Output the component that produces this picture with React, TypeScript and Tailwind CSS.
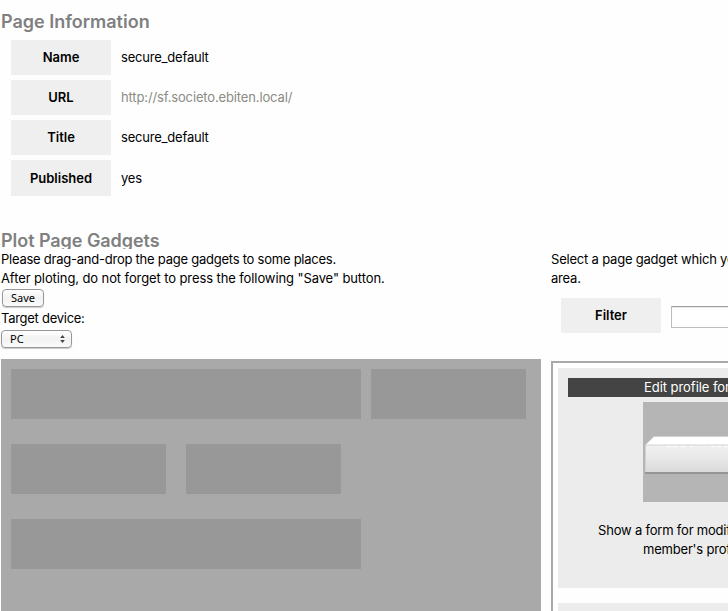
import type { ReactNode } from "react";

function InfoRow({ label, tall, children }: { label: ReactNode; tall?: boolean; children: ReactNode }) {
  return (
    <div className={tall ? "flex h-9 items-center" : "flex h-[35px] items-center"}>
      <div className="flex h-full w-[100px] items-center justify-center bg-[#efefef] font-semibold">{label}</div>
      <div className="ml-2.5 whitespace-nowrap tracking-[-0.2px]">{children}</div>
    </div>
  );
}

function SelectArrows() {
  return (
    <svg className="h-2 w-[5px]" viewBox="0 0 5 8" fill="#444">
      <path d="M2.5 0 4.8 3H.2zM2.5 8 .2 5h4.6z" />
    </svg>
  );
}

function BoxPicture() {
  return (
    <svg className="ml-[75px] mt-[5px] block h-[100px] w-[100px] bg-[#b5b5b5]" viewBox="0 0 100 100">
      <defs>
        <linearGradient id="front" x1="0" y1="0" x2="0" y2="1">
          <stop offset="0" stopColor="#f1f1f1" />
          <stop offset=".5" stopColor="#e7e7e7" />
          <stop offset="1" stopColor="#dadada" />
        </linearGradient>
      </defs>
      <path d="M2 70h96v2H2z" fill="#959595" />
      <path d="M2 43 11 34h78l9 9v27H2z" fill="#d2d2d2" />
      <path d="M3 42.5 11 35h78l8 7.500z" fill="#fff" />
      <path d="M3 43.500h94V70H3z" fill="url(#front)" />
      <path d="M24 44.500h4m2 0h4m4 0h4m5 0h2m19 0h4m2 0h4m3 0h7" stroke="#fff" />
    </svg>
  );
}

export default function App() {
  return (
    <main className="h-[611px] w-[728px] overflow-hidden bg-[#fefefe] font-['Inter','Liberation_Sans',sans-serif] text-[13px] leading-[19px] text-black">
      <section className="h-[229px] pl-px pt-2.5">
        <h2 className="h-[22px] text-[18px] font-semibold leading-[23px] text-[#808080]">Page Information</h2>
        <div className="ml-2.5 mt-2 flex flex-col gap-[5px]">
          <InfoRow label="Name">secure_default</InfoRow>
          <InfoRow label="URL"><span className="tracking-[-0.14px] text-[#8b8b84]">http://sf.societo.ebiten.local/</span></InfoRow>
          <InfoRow label="Title">secure_default</InfoRow>
          <InfoRow label="Published" tall>yes</InfoRow>
        </div>
      </section>
      <section className="pl-px">
        <h2 className="h-5 overflow-hidden text-[18px] font-semibold leading-6 tracking-[-0.05px] text-[#808080]">Plot Page Gadgets</h2>
        <div className="flex w-[830px] items-start gap-2.5">
          <div className="w-[540px] pt-px">
            <p className="tracking-[-0.24px]">Please drag-and-drop the page gadgets to some places.</p>
            <p className="tracking-[-0.1px]">After ploting, do not forget to press the following "Save" button.</p>
            <button className="ml-px mt-px block h-[18px] w-[42px] rounded-[4px] border border-[#979797] bg-linear-to-b from-white via-[#f2f2f2] to-[#fafafa] font-['Noto_Sans'] text-[11px] font-normal leading-4 shadow-[0_1px_1px_#ccc]">Save</button>
            <p className="mt-[2px] tracking-[-0.27px]">Target device:</p>
            <div className="mt-[2px] flex h-[18px] w-[71px] items-center justify-between rounded-[4px] border border-[#979797] bg-linear-to-b from-white via-[#f2f2f2] to-[#fafafa] pl-2 pr-1.5 font-['Noto_Sans'] text-[11px] font-normal leading-4 shadow-[0_1px_1px_#ccc]">
              <span>PC</span>
              <SelectArrows />
            </div>
            <div className="mt-[11px] flex h-[260px] flex-col gap-[25px] bg-[#a9a9a9] p-2.5">
              <div className="flex gap-2.5">
                <div className="h-[50px] w-[350px] bg-[#989898]" />
                <div className="h-[50px] w-[155px] bg-[#989898]" />
              </div>
              <div className="flex gap-5">
                <div className="h-[50px] w-[155px] bg-[#989898]" />
                <div className="h-[50px] w-[155px] bg-[#989898]" />
              </div>
              <div className="h-[50px] w-[350px] bg-[#989898]" />
            </div>
          </div>
          <div className="w-[280px] pt-px tracking-[-0.2px]">
            <p className="whitespace-nowrap">Select a page gadget which you want<br />area.</p>
            <div className="ml-2.5 mt-[10px] tracking-normal">
              <InfoRow label="Filter">
                <div className="mt-[3px] h-[22px] w-[150px] border border-[#bcbcbc] border-t-[#a0a0a0] bg-white shadow-[inset_0_1px_1px_#e4e4e4]" />
              </InfoRow>
            </div>
            <div className="mt-7 flex h-[260px] w-[284px] flex-col gap-[15px] border-2 border-[#a9a9a9] p-[5px]">
              <article className="h-[220px] w-[270px] shrink-0 bg-[#ececec] p-2.5">
                <h3 className="h-[19px] whitespace-nowrap bg-[#444] pl-[76px] tracking-[-0.05px] text-white">Edit profile form</h3>
                <BoxPicture />
                <p className="mt-[19px] whitespace-nowrap pl-[30px]">Show a form for modifying</p>
                <p className="whitespace-nowrap pl-[75px]">member's profile.</p>
              </article>
              <div className="h-5 w-[270px] shrink-0 bg-[#ececec]" />
            </div>
          </div>
        </div>
      </section>
    </main>
  );
}
